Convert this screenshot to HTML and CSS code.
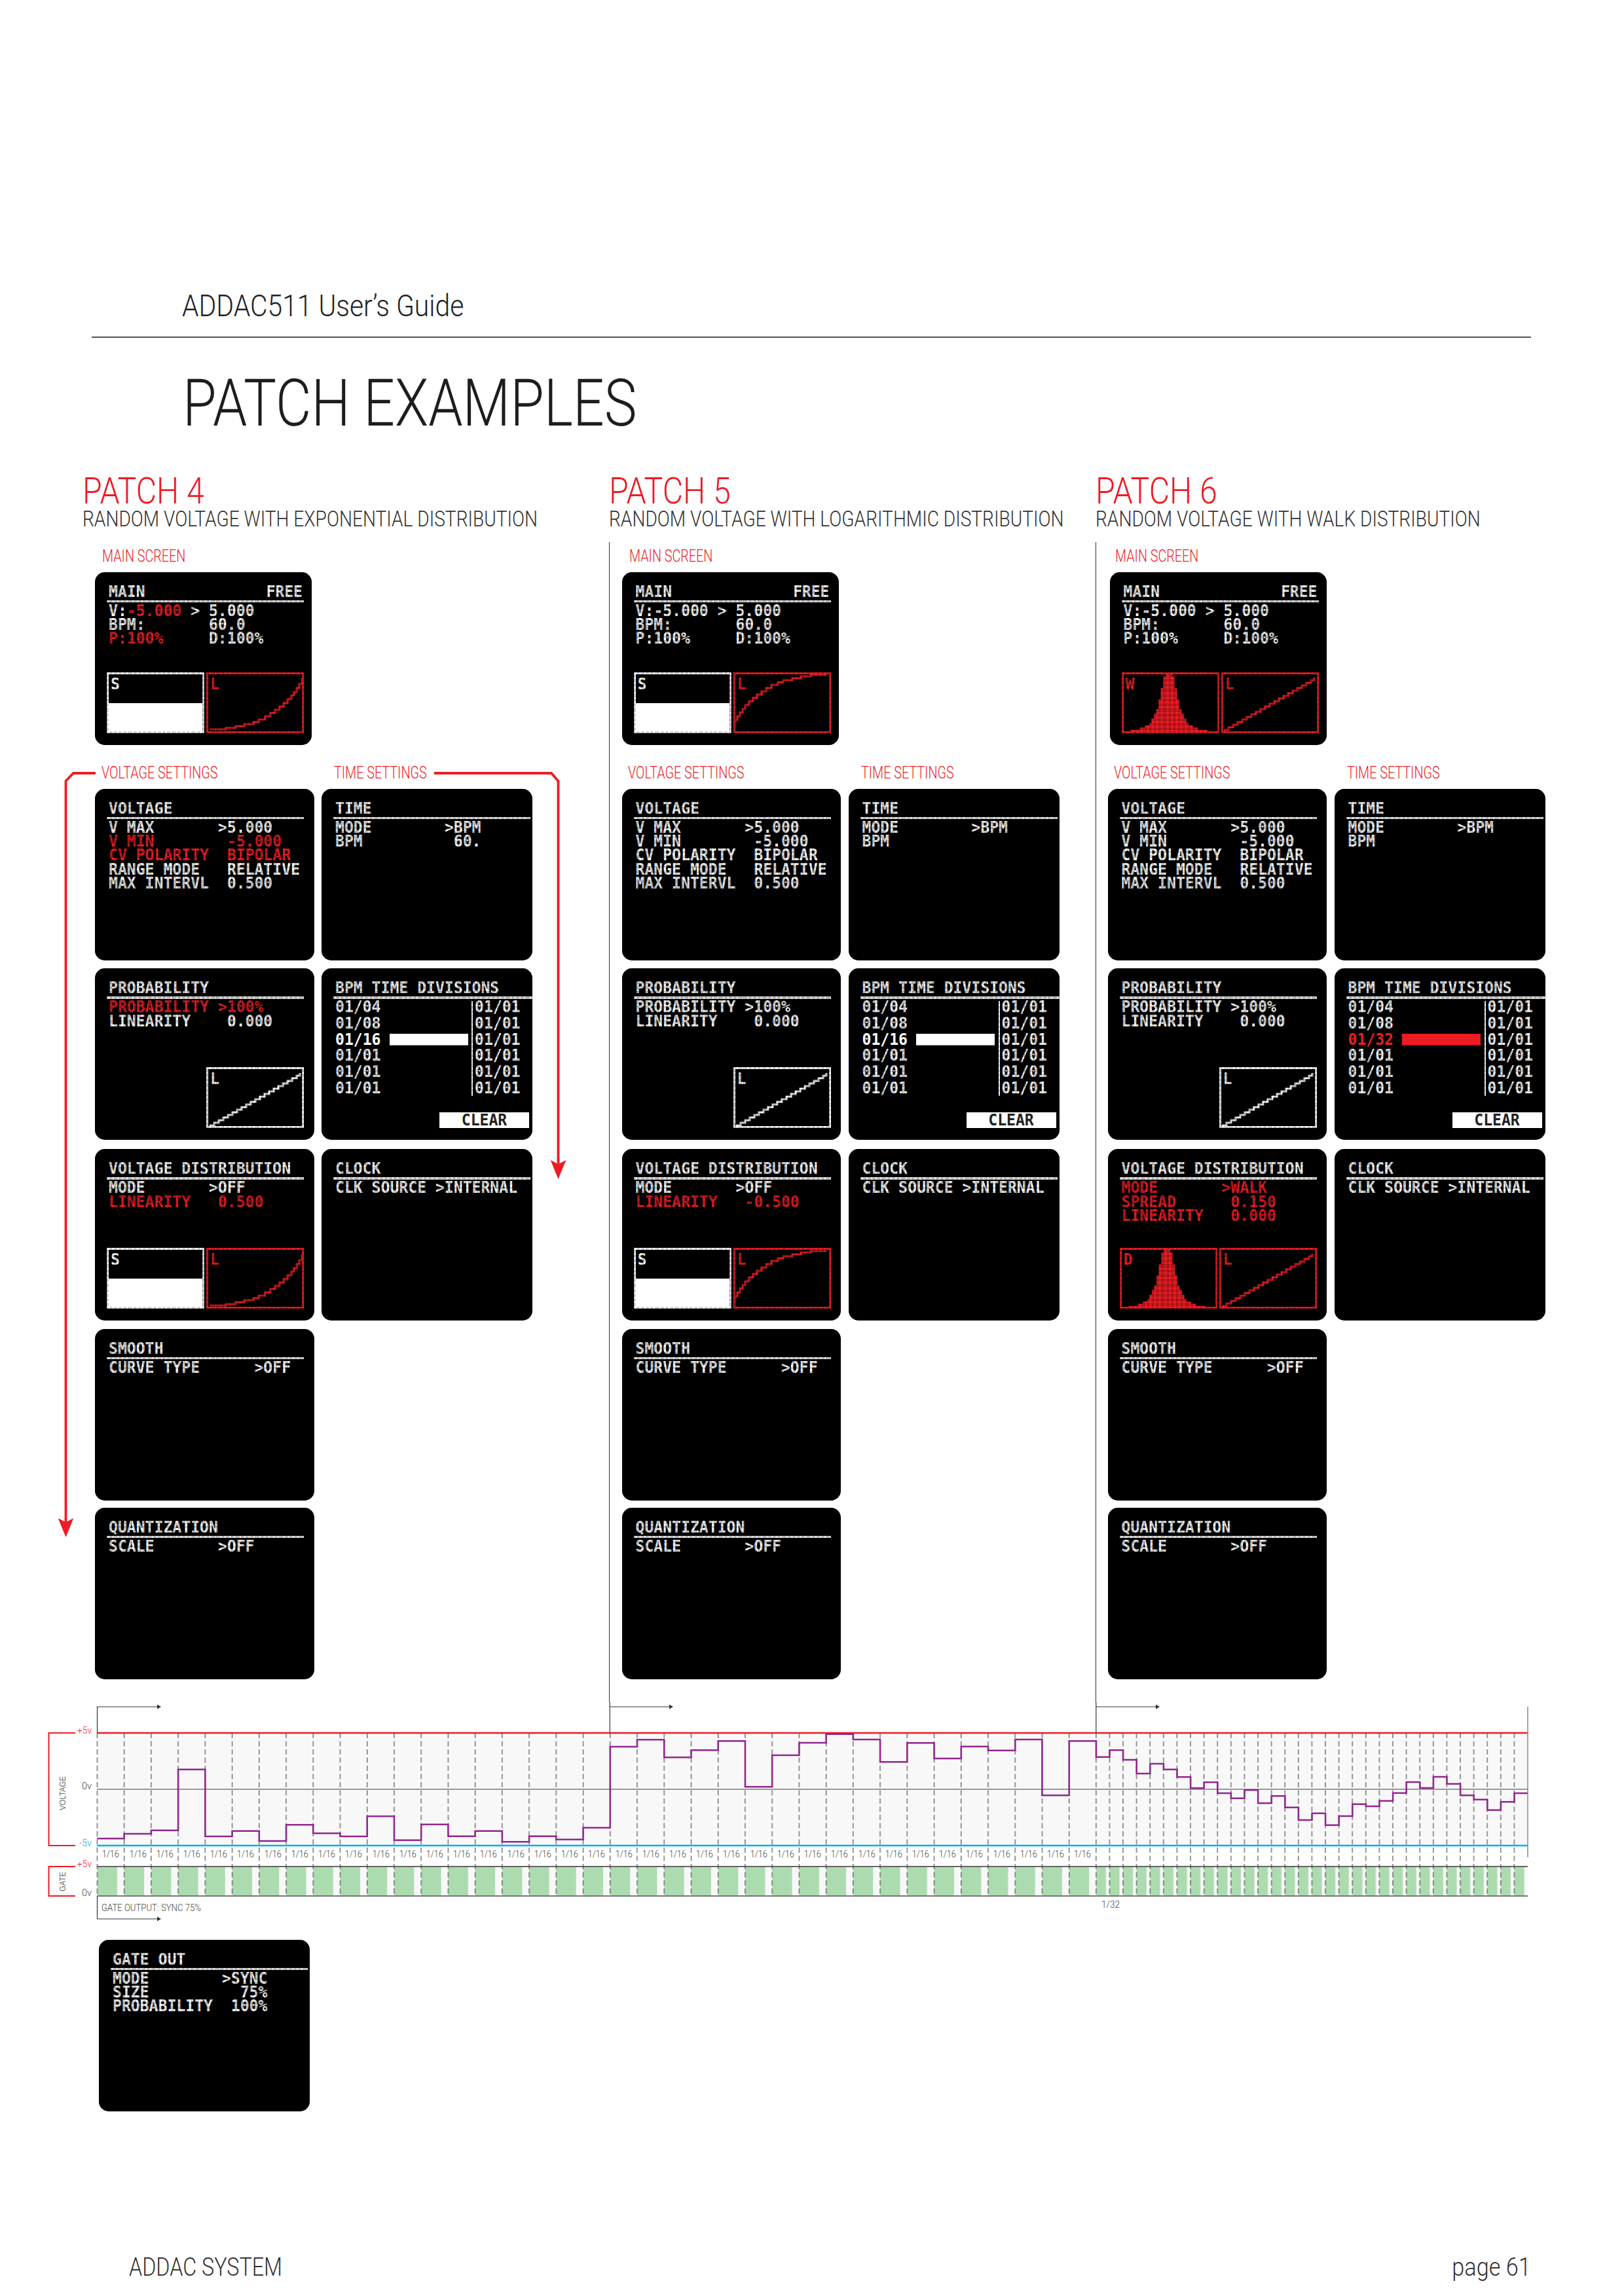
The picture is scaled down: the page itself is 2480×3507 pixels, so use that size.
FILE: index.html
```html
<!DOCTYPE html>
<html lang="en">
<head>
<meta charset="utf-8">
<title>ADDAC511 User's Guide - Patch Examples</title>
<link rel="stylesheet" href="styles.css">
</head>
<body>
<svg class="defs" width="0" height="0" aria-hidden="true">
  <symbol id="exp" viewBox="0 0 149 93"><path class="trace" d="M6 88H30V86H45V83H58V80H72V77H80V73H90V68H98V63H105V58H112V53H118V48H124V42H130V36H134V31H138V25H142V19H146V10"/></symbol>
  <symbol id="log" viewBox="0 0 149 93"><g transform="rotate(180 74.5 46.5)"><path class="trace" d="M6 88H30V86H45V83H58V80H72V77H80V73H90V68H98V63H105V58H112V53H118V48H124V42H130V36H134V31H138V25H142V19H146V10"/></g></symbol>
  <symbol id="lin" viewBox="0 0 149 93"><path class="trace" d="M5 89h7v-4h7v-4h7v-4h7v-4h7v-4h7v-4h7v-4h7v-4h7v-4h7v-4h7v-4h7v-4h7v-4h7v-4h7v-4h7v-4h7v-4h7v-4h7v-4h5v-4"/></symbol>
  <symbol id="hist" viewBox="0 0 149 93"><path class="mass" d="M68 0H78V7.3H81.7V25H85.4V42H89V57H92.3V64H96V71.5H99.6V78.3H103V82H109.7V85.3H117.5V88.7H131.8V93H14.2V88.7H28.5V85.3H36.3V82H43V78.3H46.4V71.5H50V64H53.7V57H57V42H60.6V25H64.3V7.3H68Z"/></symbol>
</svg>

<div class="page">
  <div class="guide"><span>ADDAC511 User’s Guide</span></div>
  <div class="hr"></div>
  <h1 class="title"><span>PATCH EXAMPLES</span></h1>

  <div class="patches">

    <section class="patch p4">
      <h2 class="ptitle"><span>PATCH 4</span></h2>
      <p class="psub"><span>RANDOM VOLTAGE WITH EXPONENTIAL DISTRIBUTION</span></p>
      <div class="body">
        <div class="lab lab-main"><span>MAIN SCREEN</span></div>
        <div class="screen main">
          <div class="row split"><span>MAIN</span><span>FREE</span></div>
          <div class="rule"></div>
          <div class="row">V:<span class="r">-5.000</span> &gt; 5.000</div>
          <div class="row">BPM:       60.0</div>
          <div class="row"><span class="r">P:100%</span>     D:100%</div>
          <div class="graphs">
            <div class="graph"><div class="half"></div><div class="row gl">S</div></div>
            <div class="graph red"><svg><use href="#exp"/></svg><div class="row gl">L</div></div>
          </div>
        </div>
        <div class="labs"><div class="lab lab-v"><span>VOLTAGE SETTINGS</span></div><div class="lab lab-t"><span>TIME SETTINGS</span></div></div>
        <div class="grid">
          <div class="screen">
            <div class="row">VOLTAGE</div>
            <div class="rule"></div>
            <div class="row">V MAX       &gt;5.000</div>
            <div class="row r">V MIN        -5.000</div>
            <div class="row r">CV POLARITY  BIPOLAR</div>
            <div class="row">RANGE MODE   RELATIVE</div>
            <div class="row">MAX INTERVL  0.500</div>
          </div>
          <div class="screen">
            <div class="row">TIME</div>
            <div class="rule"></div>
            <div class="row">MODE        &gt;BPM</div>
            <div class="row">BPM          60.</div>
          </div>
          <div class="screen">
            <div class="row">PROBABILITY</div>
            <div class="rule"></div>
            <div class="row r">PROBABILITY &gt;100%</div>
            <div class="row">LINEARITY    0.000</div>
            <div class="graphs end"><div class="graph"><svg><use href="#lin"/></svg><div class="row gl">L</div></div></div>
          </div>
          <div class="screen">
            <div class="row">BPM TIME DIVISIONS</div>
            <div class="rule wide"></div>
            <div class="divs">
              <div class="dcol">
                <div class="row">01/04</div>
                <div class="row">01/08</div>
                <div class="row barrow">01/16<i class="bar"></i></div>
                <div class="row">01/01</div>
                <div class="row">01/01</div>
                <div class="row">01/01</div>
              </div>
              <div class="dcol right">
                <div class="row">01/01</div>
                <div class="row">01/01</div>
                <div class="row">01/01</div>
                <div class="row">01/01</div>
                <div class="row">01/01</div>
                <div class="row">01/01</div>
              </div>
            </div>
            <div class="clear"><div class="row">CLEAR</div></div>
          </div>
          <div class="screen">
            <div class="row">VOLTAGE DISTRIBUTION</div>
            <div class="rule"></div>
            <div class="row">MODE       &gt;OFF</div>
            <div class="row r">LINEARITY   0.500</div>
            <div class="graphs">
              <div class="graph"><div class="half"></div><div class="row gl">S</div></div>
              <div class="graph red"><svg><use href="#exp"/></svg><div class="row gl">L</div></div>
            </div>
          </div>
          <div class="screen">
            <div class="row">CLOCK</div>
            <div class="rule"></div>
            <div class="row">CLK SOURCE &gt;INTERNAL</div>
          </div>
          <div class="screen">
            <div class="row">SMOOTH</div>
            <div class="rule"></div>
            <div class="row">CURVE TYPE      &gt;OFF</div>
          </div>
          <div class="blank"></div>
          <div class="screen">
            <div class="row">QUANTIZATION</div>
            <div class="rule"></div>
            <div class="row">SCALE       &gt;OFF</div>
          </div>
        </div>
      </div>
    </section>

    <section class="patch p5">
      <h2 class="ptitle"><span>PATCH 5</span></h2>
      <p class="psub"><span>RANDOM VOLTAGE WITH LOGARITHMIC DISTRIBUTION</span></p>
      <div class="body">
        <div class="lab lab-main"><span>MAIN SCREEN</span></div>
        <div class="screen main">
          <div class="row split"><span>MAIN</span><span>FREE</span></div>
          <div class="rule"></div>
          <div class="row">V:-5.000 &gt; 5.000</div>
          <div class="row">BPM:       60.0</div>
          <div class="row">P:100%     D:100%</div>
          <div class="graphs">
            <div class="graph"><div class="half"></div><div class="row gl">S</div></div>
            <div class="graph red"><svg><use href="#log"/></svg><div class="row gl">L</div></div>
          </div>
        </div>
        <div class="labs"><div class="lab lab-v"><span>VOLTAGE SETTINGS</span></div><div class="lab lab-t"><span>TIME SETTINGS</span></div></div>
        <div class="grid">
          <div class="screen">
            <div class="row">VOLTAGE</div>
            <div class="rule"></div>
            <div class="row">V MAX       &gt;5.000</div>
            <div class="row">V MIN        -5.000</div>
            <div class="row">CV POLARITY  BIPOLAR</div>
            <div class="row">RANGE MODE   RELATIVE</div>
            <div class="row">MAX INTERVL  0.500</div>
          </div>
          <div class="screen">
            <div class="row">TIME</div>
            <div class="rule"></div>
            <div class="row">MODE        &gt;BPM</div>
            <div class="row">BPM</div>
          </div>
          <div class="screen">
            <div class="row">PROBABILITY</div>
            <div class="rule"></div>
            <div class="row">PROBABILITY &gt;100%</div>
            <div class="row">LINEARITY    0.000</div>
            <div class="graphs end"><div class="graph"><svg><use href="#lin"/></svg><div class="row gl">L</div></div></div>
          </div>
          <div class="screen">
            <div class="row">BPM TIME DIVISIONS</div>
            <div class="rule wide"></div>
            <div class="divs">
              <div class="dcol">
                <div class="row">01/04</div>
                <div class="row">01/08</div>
                <div class="row barrow">01/16<i class="bar"></i></div>
                <div class="row">01/01</div>
                <div class="row">01/01</div>
                <div class="row">01/01</div>
              </div>
              <div class="dcol right">
                <div class="row">01/01</div>
                <div class="row">01/01</div>
                <div class="row">01/01</div>
                <div class="row">01/01</div>
                <div class="row">01/01</div>
                <div class="row">01/01</div>
              </div>
            </div>
            <div class="clear"><div class="row">CLEAR</div></div>
          </div>
          <div class="screen">
            <div class="row">VOLTAGE DISTRIBUTION</div>
            <div class="rule"></div>
            <div class="row">MODE       &gt;OFF</div>
            <div class="row r">LINEARITY   -0.500</div>
            <div class="graphs">
              <div class="graph"><div class="half"></div><div class="row gl">S</div></div>
              <div class="graph red"><svg><use href="#log"/></svg><div class="row gl">L</div></div>
            </div>
          </div>
          <div class="screen">
            <div class="row">CLOCK</div>
            <div class="rule"></div>
            <div class="row">CLK SOURCE &gt;INTERNAL</div>
          </div>
          <div class="screen">
            <div class="row">SMOOTH</div>
            <div class="rule"></div>
            <div class="row">CURVE TYPE      &gt;OFF</div>
          </div>
          <div class="blank"></div>
          <div class="screen">
            <div class="row">QUANTIZATION</div>
            <div class="rule"></div>
            <div class="row">SCALE       &gt;OFF</div>
          </div>
        </div>
      </div>
    </section>

    <section class="patch p6">
      <h2 class="ptitle"><span>PATCH 6</span></h2>
      <p class="psub"><span>RANDOM VOLTAGE WITH WALK DISTRIBUTION</span></p>
      <div class="body">
        <div class="lab lab-main"><span>MAIN SCREEN</span></div>
        <div class="screen main shifted">
          <div class="row split"><span>MAIN</span><span>FREE</span></div>
          <div class="rule"></div>
          <div class="row">V:-5.000 &gt; 5.000</div>
          <div class="row">BPM:       60.0</div>
          <div class="row">P:100%     D:100%</div>
          <div class="graphs">
            <div class="graph red"><svg><use href="#hist"/></svg><div class="row gl">W</div></div>
            <div class="graph red"><svg><use href="#lin"/></svg><div class="row gl">L</div></div>
          </div>
        </div>
        <div class="labs"><div class="lab lab-v"><span>VOLTAGE SETTINGS</span></div><div class="lab lab-t"><span>TIME SETTINGS</span></div></div>
        <div class="grid">
          <div class="screen">
            <div class="row">VOLTAGE</div>
            <div class="rule"></div>
            <div class="row">V MAX       &gt;5.000</div>
            <div class="row">V MIN        -5.000</div>
            <div class="row">CV POLARITY  BIPOLAR</div>
            <div class="row">RANGE MODE   RELATIVE</div>
            <div class="row">MAX INTERVL  0.500</div>
          </div>
          <div class="screen">
            <div class="row">TIME</div>
            <div class="rule"></div>
            <div class="row">MODE        &gt;BPM</div>
            <div class="row">BPM</div>
          </div>
          <div class="screen">
            <div class="row">PROBABILITY</div>
            <div class="rule"></div>
            <div class="row">PROBABILITY &gt;100%</div>
            <div class="row">LINEARITY    0.000</div>
            <div class="graphs end"><div class="graph"><svg><use href="#lin"/></svg><div class="row gl">L</div></div></div>
          </div>
          <div class="screen">
            <div class="row">BPM TIME DIVISIONS</div>
            <div class="rule wide"></div>
            <div class="divs">
              <div class="dcol">
                <div class="row">01/04</div>
                <div class="row">01/08</div>
                <div class="row barrow r">01/32<i class="bar"></i></div>
                <div class="row">01/01</div>
                <div class="row">01/01</div>
                <div class="row">01/01</div>
              </div>
              <div class="dcol right">
                <div class="row">01/01</div>
                <div class="row">01/01</div>
                <div class="row">01/01</div>
                <div class="row">01/01</div>
                <div class="row">01/01</div>
                <div class="row">01/01</div>
              </div>
            </div>
            <div class="clear"><div class="row">CLEAR</div></div>
          </div>
          <div class="screen">
            <div class="row">VOLTAGE DISTRIBUTION</div>
            <div class="rule"></div>
            <div class="row r">MODE       &gt;WALK</div>
            <div class="row r">SPREAD      0.150</div>
            <div class="row r">LINEARITY   0.000</div>
            <div class="graphs">
              <div class="graph red"><svg><use href="#hist"/></svg><div class="row gl">D</div></div>
              <div class="graph red"><svg><use href="#lin"/></svg><div class="row gl">L</div></div>
            </div>
          </div>
          <div class="screen">
            <div class="row">CLOCK</div>
            <div class="rule"></div>
            <div class="row">CLK SOURCE &gt;INTERNAL</div>
          </div>
          <div class="screen">
            <div class="row">SMOOTH</div>
            <div class="rule"></div>
            <div class="row">CURVE TYPE      &gt;OFF</div>
          </div>
          <div class="blank"></div>
          <div class="screen">
            <div class="row">QUANTIZATION</div>
            <div class="rule"></div>
            <div class="row">SCALE       &gt;OFF</div>
          </div>
        </div>
      </div>
    </section>
  </div>

  <div class="chart">
    <svg class="plot" viewBox="0 2600 2480 340" width="2480" height="340">
      <defs>
        <pattern id="d16" x="128" y="2647" width="41.23" height="250" patternUnits="userSpaceOnUse"><line class="dash" x1="20.4" x2="20.4" y1="0" y2="250"/></pattern>
        <pattern id="d32" x="1664" y="2647" width="20.6" height="250" patternUnits="userSpaceOnUse"><line class="dash" x1="9.8" x2="9.8" y1="0" y2="250"/></pattern>
        <pattern id="g16" x="148.4" y="2852" width="41.23" height="44" patternUnits="userSpaceOnUse"><rect class="green" width="30.5" height="44"/></pattern>
        <pattern id="g32" x="1673.8" y="2852" width="20.6" height="44" patternUnits="userSpaceOnUse"><rect class="green" width="15.2" height="44"/></pattern>
      </defs>
      <rect class="bg" x="148.4" y="2647" width="2184.6" height="172"/>
      <rect class="bg" x="148.4" y="2851" width="2184.6" height="45"/>
      <rect x="148.4" y="2852" width="1525.4" height="43" fill="url(#g16)"/>
      <rect x="1673.8" y="2852" width="659.2" height="43" fill="url(#g32)"/>
      <rect x="128" y="2647" width="1562" height="249" fill="url(#d16)"/>
      <rect x="1684" y="2647" width="640" height="249" fill="url(#d32)"/>

      <path class="zero" d="M148.4 2733H2333"/>
      <path class="top-line" d="M148.4 2647H2333"/>
      <path class="blue-line" d="M148.4 2819H2333"/>
      <path class="gate-top" d="M148.4 2851H2333"/>
      <path class="gate-bot" d="M148.4 2896H2333"/>

      <path class="wave" d="M148.4 2808.3h41.23V2801h41.23V2795.7h41.23V2702.7h41.23V2805h41.23V2796.7h41.23V2812h41.23V2787.3h41.23V2800.3h41.23V2805h41.23V2774.3h41.23V2810.7h41.23V2786.7h41.23V2804.7h41.23V2796.7h41.23V2813.3h41.23V2804.7h41.23V2809.7h41.23V2791.7h41.23V2668h41.23V2657.3h41.23V2684.3h41.23V2673.3h41.23V2659.3h41.23V2729.3h41.23V2681h41.23V2662h41.23V2648.7h41.23V2657h41.23V2691.3h41.23V2662.3h41.23V2686h41.23V2667.7h41.23V2673.7h41.23V2657h41.23V2742.3h41.23V2659.3h41.23V2683.7h20.6V2673.3h20.6V2688h20.6V2709h20.6V2694h20.6V2702.7h20.6V2714.3h20.6V2731.3h20.6V2722.3h20.6V2739h20.6V2746.7h20.6V2734.3h20.6V2754.3h20.6V2743.3h20.6V2760.7h20.6V2780h20.6V2769.7h20.6V2787.7h20.6V2774h20.6V2755.7h20.6V2759h20.6V2750.7h20.6V2738.7h20.6V2722h20.6V2731h20.6V2714h20.6V2724.7h20.6V2742.3h20.6V2748.7h20.6V2764.7h20.6V2752.3h20.6V2739h20.6"/>

      <path class="guide-line" d="M148.5 2647V2607H240"/>
      <path class="guide-tip" d="M240 2603.5l6 3.5l-6 3.5z"/>
      <path class="guide-line" d="M931.3 2647V2600M931.3 2607H1022"/>
      <path class="guide-tip" d="M1022 2603.5l6 3.5l-6 3.5z"/>
      <path class="guide-line" d="M1673.8 2647V2600M1673.8 2607H1765"/>
      <path class="guide-tip" d="M1765 2603.5l6 3.5l-6 3.5z"/>
      <path class="guide-line" d="M148.5 2896V2931H240"/>
      <path class="guide-tip" d="M240 2927.5l6 3.5l-6 3.5z"/>
      <path class="end-line" d="M2333 2607V2837"/>

      <path class="bracket" d="M115 2647H74.5V2819H115"/>
      <path class="bracket" d="M115 2851H74.5V2896H115"/>
      <text class="t-red" x="118" y="2648" textLength="22" lengthAdjust="spacingAndGlyphs">+5v</text>
      <text class="t-blue" x="121" y="2820" textLength="19" lengthAdjust="spacingAndGlyphs">-5v</text>
      <text class="t-dark" x="125" y="2733" textLength="15" lengthAdjust="spacingAndGlyphs">0v</text>
      <text class="t-red" x="118" y="2852" textLength="22" lengthAdjust="spacingAndGlyphs">+5v</text>
      <text class="t-dark" x="125" y="2896" textLength="15" lengthAdjust="spacingAndGlyphs">0v</text>
      <text class="t-rot" transform="translate(100 2765) rotate(-90)" textLength="52" lengthAdjust="spacingAndGlyphs">VOLTAGE</text>
      <text class="t-rot" transform="translate(100 2889) rotate(-90)" textLength="30" lengthAdjust="spacingAndGlyphs">GATE</text>
      <text class="t-dark" x="155" y="2919" textLength="152" lengthAdjust="spacingAndGlyphs">GATE OUTPUT: SYNC 75%</text>
      <text class="t-dark" x="1682" y="2914" textLength="28" lengthAdjust="spacingAndGlyphs">1/32</text>
    </svg>
    <div class="steps">
      <span>1/16</span><span>1/16</span><span>1/16</span><span>1/16</span><span>1/16</span><span>1/16</span><span>1/16</span><span>1/16</span><span>1/16</span><span>1/16</span><span>1/16</span><span>1/16</span><span>1/16</span><span>1/16</span><span>1/16</span><span>1/16</span><span>1/16</span><span>1/16</span><span>1/16</span><span>1/16</span><span>1/16</span><span>1/16</span><span>1/16</span><span>1/16</span><span>1/16</span><span>1/16</span><span>1/16</span><span>1/16</span><span>1/16</span><span>1/16</span><span>1/16</span><span>1/16</span><span>1/16</span><span>1/16</span><span>1/16</span><span>1/16</span><span>1/16</span>
    </div>
  </div>

  <div class="screen gateout">
    <div class="row">GATE OUT</div>
    <div class="rule"></div>
    <div class="row">MODE        &gt;SYNC</div>
    <div class="row">SIZE          75%</div>
    <div class="row">PROBABILITY  100%</div>
  </div>

  <footer class="foot"><span class="fl">ADDAC SYSTEM</span><span class="fr">page 61</span></footer>

  <svg class="arrows" viewBox="0 0 2480 3507" width="2480" height="3507" aria-hidden="true">
    <path class="red-path" d="M146 1181H112L100.5 1193V2325"/>
    <path class="red-head" d="M88.7 2319L100.5 2325L112.3 2319L100.5 2348Z"/>
    <path class="red-path" d="M663 1181H842L852.5 1193V1778"/>
    <path class="red-head" d="M840.7 1772L852.5 1778L864.3 1772L852.5 1801Z"/>
  </svg>
</div>
</body>
</html>
```

FILE: styles.css
```css
* { box-sizing: border-box; }
html, body { margin: 0; padding: 0; background: #fff; }
.defs { position: absolute; }
.page { position: relative; width: 2480px; height: 3507px; overflow: hidden; display: flex; flex-direction: column; font-family: Roboto, "Liberation Sans", sans-serif; font-weight: 300; color: #333; }

.guide { margin-top: 444px; height: 46px; padding-left: 278px; font-size: 46px; line-height: 46px; white-space: nowrap; color: #222; }
.guide span, .title span, .ptitle span, .psub span, .lab span, .fl, .fr { display: inline-block; transform-origin: 0 50%; white-space: nowrap; }
.guide span { transform: scaleX(.888); }
.hr { margin: 24px 0 0 139.5px; width: 2198px; height: 2px; background: #555; }
.title { margin: 49px 0 0; height: 101px; padding-left: 279px; font-size: 101px; line-height: 101px; font-weight: 300; color: #1d1d1b; }
.title span { transform: scaleX(.83); }

.patches { display: flex; margin-top: 56px; height: 1878px; }
.patch { display: flex; flex-direction: column; }
.p4 { width: 804px; margin-left: 126px; }
.p5 { width: 742.5px; }
.p6 { flex: 1; }
.ptitle { margin: 0; height: 54px; font-size: 56px; line-height: 56px; font-weight: 300; color: #ed1c24; }
.ptitle span { transform: scaleX(.862); }
.psub { margin: 0; height: 52px; font-size: 33px; line-height: 33px; color: #333; }
.psub span { transform: scaleX(.852); }
.body { flex: 1; padding-left: 19px; }
.p5 .body { border-left: 1.5px solid #333; padding-left: 18.5px; }
.p6 .body { border-left: 1.5px solid #333; margin-left: .5px; padding-left: 17.5px; }

.lab { font-size: 26px; line-height: 26px; height: 26px; color: #ed1c24; white-space: nowrap; }
.lab span { transform: scaleX(.76); }
.lab-main { margin: 7.6px 0 12.4px 11px; }
.labs { display: grid; grid-template-columns: 346px 322px; margin: 29px 0 12px; }
.lab-v { padding-left: 9.6px; }
.lab-t { padding-left: 19px; }

.grid { display: grid; grid-template-columns: 334.5px 322px; column-gap: 11.5px; row-gap: 12.5px; grid-template-rows: 262px 263.5px 262px 260.5px 262px; }

.screen { position: relative; height: 262px; display: flex; flex-direction: column; padding: 21px 0 0 18px; background: #000; border-radius: 15px; color: #fff; overflow: hidden; font-family: "DejaVu Sans Mono", "Liberation Mono", monospace; font-weight: 700; font-size: 23.1px; }
.screen::after { content: ""; position: absolute; inset: 0; pointer-events: none; background: repeating-linear-gradient(90deg, rgba(0,0,0,.3) 0 .7px, transparent .7px 2.31px), repeating-linear-gradient(0deg, rgba(0,0,0,.3) 0 .7px, transparent .7px 2.31px); }
.main { width: 331px; height: 264px; }
.shifted { margin-left: 3px; }
.gateout { width: 322px; margin: 23px 0 0 151px; flex: none; }

.row { height: 21.2px; margin-left: 3px; line-height: 15.5px; white-space: pre; transform: scaleY(1.1); transform-origin: 0 0; flex: none; }
.r { color: #ed1c24; }
.split { display: flex; justify-content: space-between; width: 296px; }
.rule { width: 301px; height: 3.5px; margin: .8px 0 3.5px; background: #fff; flex: none; }
.rule.wide { width: 304px; }

.graphs { display: flex; gap: 3px; margin-top: auto; margin-bottom: 18px; width: 301px; }
.graphs.end { justify-content: flex-end; }
.graph { position: relative; width: 149px; height: 93px; border: 3.5px solid #fff; color: #fff; overflow: hidden; }
.graph.red { border-color: #ed1c24; color: #ed1c24; }
.graph svg { position: absolute; left: -3.5px; top: -3.5px; width: 149px; height: 93px; }
.half { position: absolute; left: 0; right: 0; bottom: 0; height: 43px; background: #fff; z-index: 2; }
.gl { position: absolute; left: 3px; top: 6px; margin: 0; }
.trace { fill: none; stroke: currentColor; stroke-width: 3; }
.mass { fill: currentColor; }

.divs { display: flex; margin-top: -3.5px; height: 148px; padding-top: 3px; }
.dcol { display: flex; flex-direction: column; gap: 3.6px; width: 211px; height: 145px; }
.dcol.right { width: auto; border-left: 2.5px solid #fff; }
.barrow { display: flex; z-index: 2; }
.bar { display: block; width: 120px; height: 15.5px; margin: 0 0 0 13px; background: currentColor; }
.clear { position: relative; z-index: 2; align-self: flex-end; width: 137px; height: 24.5px; margin: auto 5px 18px 0; background: #fff; color: #222; text-align: center; padding-top: 3.5px; }
.clear .row { margin-left: 0; }

.chart { position: relative; height: 340px; flex: none; }
.plot { display: block; }
.dash { stroke: #444; stroke-width: 1.1; stroke-dasharray: 8 4.5; }
.green { fill: #addbb0; }
.bg { fill: #f8f8f8; }
.zero { stroke: #999; stroke-width: 2; fill: none; }
.top-line { stroke: #ed1c24; stroke-width: 2.5; fill: none; }
.blue-line { stroke: #00aeef; stroke-width: 2.5; fill: none; }
.gate-top { stroke: #333; stroke-width: 1.5; fill: none; }
.gate-bot { stroke: #777; stroke-width: 2; fill: none; }
.wave { fill: none; stroke: #92278f; stroke-width: 2.6; }
.guide-line { fill: none; stroke: #333; stroke-width: 1.2; }
.guide-tip { fill: #333; }
.end-line { fill: none; stroke: #888; stroke-width: 1.5; }
.bracket { fill: none; stroke: #ed1c24; stroke-width: 2; }
.plot text { font-family: Roboto, "Liberation Sans", sans-serif; font-weight: 300; font-size: 15px; }
.t-red { fill: #ed1c24; }
.t-blue { fill: #00aeef; }
.t-dark { fill: #444; }
.plot .t-rot { font-family: "Liberation Sans", sans-serif; font-weight: 400; font-size: 13px; fill: #666; }
.steps { position: absolute; left: 148.4px; top: 223px; display: flex; }
.steps span { flex: 0 0 41.23px; padding-left: 9px; font-size: 15px; line-height: 18px; color: #444; transform: scaleX(.85); transform-origin: 0 50%; }

.foot { margin-top: auto; height: 64px; padding: 0 142px 0 197px; display: flex; justify-content: space-between; font-size: 38px; line-height: 40px; color: #333; }
.fl { transform: scaleX(.85); }
.fr { transform: scaleX(.9); transform-origin: 100% 50%; }

.arrows { position: absolute; left: 0; top: 0; pointer-events: none; }
.red-path { fill: none; stroke: #ed1c24; stroke-width: 3.8; }
.red-head { fill: #ed1c24; }
```
